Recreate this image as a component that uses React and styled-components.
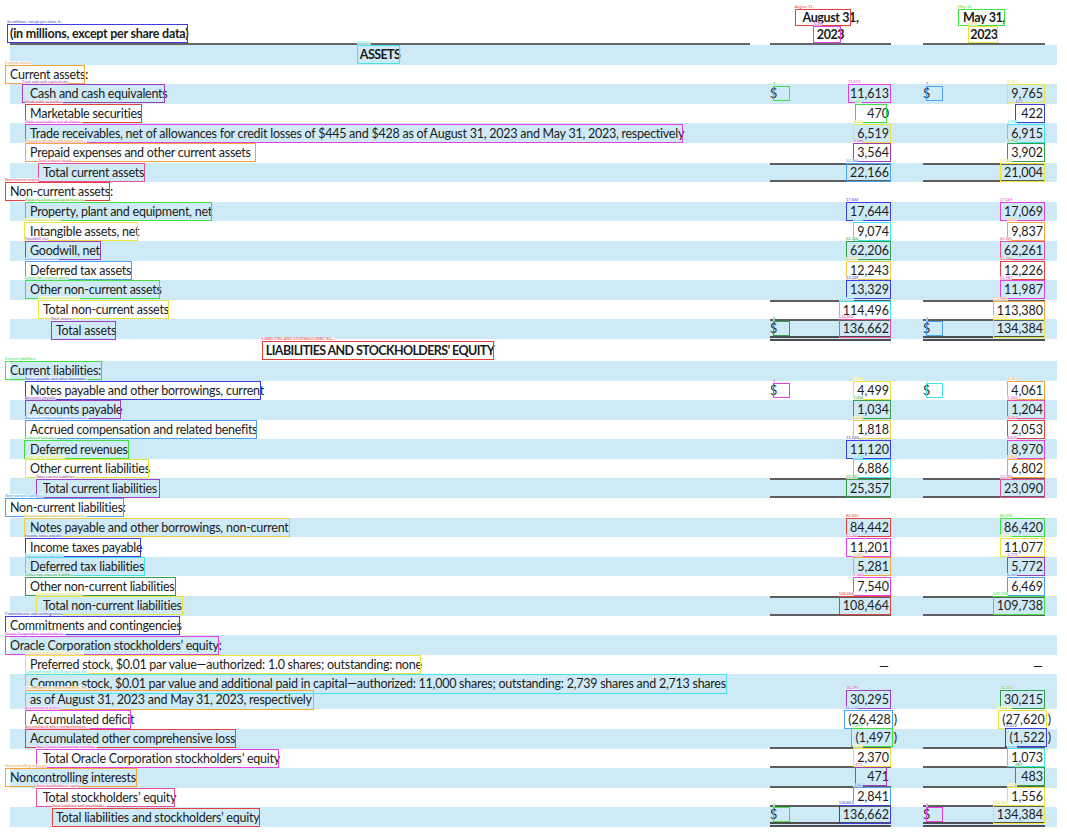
import React from 'react';
import styled, { createGlobalStyle } from 'styled-components';

const GlobalStyle = createGlobalStyle`
  body {
    margin: 0;
    background: #fff;
    font-family: Lato, 'Liberation Sans', sans-serif;
    color: #1b1b1b;
  }
`;

// label | gap | Aug 31 | gap | May 31 | tail
const COLS = '740px 20px 121px 32px 122px 12px';
const RULE = '2px solid #5e5e5e';

const C = {
  blue: '#3c3ce2',
  purple: '#a03cbe',
  red: '#e6403c',
  magenta: '#e440e6',
  pink: '#ea4c9c',
  orange: '#f2a63c',
  yellow: '#ece43a',
  gold: '#f0cc44',
  green: '#40e040',
  dgreen: '#30a048',
  cyan: '#40e4ea',
  lblue: '#4ca2f2',
};

const Sheet = styled.div`
  width: 1047px;
  padding: 0 10px;
  font-size: 12.5px;
`;

const HeaderRow = styled.div`
  display: grid;
  grid-template-columns: ${COLS};
  height: 45px;
  align-items: end;
`;

const HeadLabel = styled.div`
  grid-column: 1;
  border-bottom: 2px solid #666;
  padding-bottom: 2px;
  font-weight: 700;
  line-height: 15px;
  letter-spacing: -0.25px;
`;

const DateHead = styled.div`
  grid-column: ${p => p.$col};
  display: flex;
  flex-direction: column;
  align-items: center;
  border-bottom: 2px solid #666;
  font-weight: 700;
  line-height: 17px;
  letter-spacing: -0.4px;
`;

const Row = styled.div`
  display: grid;
  grid-template-columns: ${COLS};
  height: ${p => p.$h || 19.6}px;
  background: ${p => (p.$shade ? '#cfeaf7' : 'transparent')};
`;

const LabelCell = styled.div`
  grid-column: 1;
  display: flex;
  flex-direction: column;
  justify-content: center;
  align-items: flex-start;
  padding-left: ${p => [0, 20, 33, 46][p.$lvl]}px;
  line-height: ${p => (p.$tall ? 16 : 15)}px;
  letter-spacing: -0.25px;
  white-space: nowrap;
`;

const SectionCell = styled.div`
  grid-column: 1;
  display: flex;
  align-items: center;
  justify-content: center;
  font-weight: 700;
  line-height: 15px;
  letter-spacing: -0.6px;
  white-space: nowrap;
  padding-top: ${p => (p.$pad ? 2 : 0)}px;
`;

const NumCell = styled.div`
  grid-column: ${p => p.$col};
  display: flex;
  align-items: ${p => (p.$low ? 'flex-end' : 'center')};
  justify-content: flex-end;
  padding: 0 2px ${p => (p.$low ? 2 : 0)}px 0;
  line-height: 15px;
  white-space: nowrap;
  border-top: ${p => (p.$top ? RULE : 'none')};
  border-bottom: ${p => (p.$dbl ? '5px double #4e4e4e' : p.$bottom ? RULE : 'none')};
`;

// annotation frame drawn over a piece of text, with its tiny caption
const Tag = styled.span`
  position: relative;
  display: inline-block;

  &::after {
    content: '';
    position: absolute;
    left: ${p => p.$l}px;
    right: ${p => p.$r}px;
    top: ${p => p.$v}px;
    bottom: ${p => p.$v}px;
    border: 1.5px solid ${p => p.$c};
    pointer-events: none;
  }
`;

const TagLabel = styled.span`
  position: absolute;
  left: ${p => p.$l}px;
  top: ${p => p.$v - 4}px;
  font-size: 4px;
  line-height: 4px;
  font-weight: 400;
  letter-spacing: 0;
  color: ${p => p.$c};
  background: rgba(255, 255, 255, 0.7);
  white-space: nowrap;
`;

const Dollar = styled.span`
  position: relative;
  margin-right: auto;

  &::after {
    content: '';
    position: absolute;
    left: 3px;
    width: 15px;
    top: 0;
    bottom: 0;
    border: 1.5px solid ${p => p.$c};
  }
`;

const Paren = styled.span`
  margin-left: 3px;
  margin-right: -8px;
`;

const Dash = styled.span`
  padding-top: 3px;
`;

const short = t => (t.length > 32 ? t.slice(0, 32) + '…' : t);

// l / r: css offsets of the frame from the text box (negative = outside)
const Box = ({ c, text, l = -5, r = 0, v = -2 }) => (
  <Tag $c={c} $l={l} $r={r} $v={v}>
    <TagLabel $c={c} $l={l} $v={v}>{short(text)}</TagLabel>
    {text}
  </Tag>
);

const Amount = ({ cell }) => {
  if (!cell) return null;
  if (cell === '—') return <Dash>—</Dash>;
  const { v, c, l = -4, r = -2 } = cell;
  const neg = v.startsWith('(');
  const core = neg ? v.slice(0, -1) : v;
  return (
    <>
      <Box c={c} text={core} l={l} r={r} />
      {neg && <Paren>)</Paren>}
    </>
  );
};

const n = (v, c, l, r) => ({ v, c, l, r });

// label "x" = how far the frame reaches past the end of the text (px)
const rows = [
  { section: true, label: 'ASSETS', c: C.cyan, l: -3, r: 0 },
  { label: 'Current assets:', lvl: 0, c: C.orange, x: -3 },
  { label: 'Cash and cash equivalents', lvl: 1, c: C.purple, l: -8, x: -2, a: n('11,613', C.magenta, -2), b: n('9,765', C.yellow), usd: [C.green, C.lblue] },
  { label: 'Marketable securities', lvl: 1, c: C.red, a: n('470', C.green, -12, 2), b: n('422', C.blue, -6) },
  { label: 'Trade receivables, net of allowances for credit losses of $445 and $428 as of August 31, 2023 and May 31, 2023, respectively', lvl: 1, c: C.magenta, x: -1, a: n('6,519', C.yellow), b: n('6,915', C.cyan) },
  { label: 'Prepaid expenses and other current assets', lvl: 1, c: C.orange, x: 5, a: n('3,564', C.purple), b: n('3,902', C.dgreen) },
  { label: 'Total current assets', lvl: 2, c: C.pink, x: 1, a: n('22,166', C.lblue), b: n('21,004', C.yellow), top: true, bottom: true },
  { label: 'Non-current assets:', lvl: 0, c: C.red, x: -3 },
  { label: 'Property, plant and equipment, net', lvl: 1, c: C.green, a: n('17,644', C.blue), b: n('17,069', C.magenta) },
  { label: 'Intangible assets, net', lvl: 1, c: C.yellow, l: -6, x: -1, a: n('9,074', C.cyan), b: n('9,837', C.orange) },
  { label: 'Goodwill, net', lvl: 1, c: C.purple, x: 1, a: n('62,206', C.dgreen), b: n('62,261', C.pink) },
  { label: 'Deferred tax assets', lvl: 1, c: C.lblue, x: 1, a: n('12,243', C.gold), b: n('12,226', C.red) },
  { label: 'Other non-current assets', lvl: 1, c: C.green, x: -2, a: n('13,329', C.blue), b: n('11,987', C.magenta) },
  { label: 'Total non-current assets', lvl: 2, c: C.yellow, a: n('114,496', C.cyan), b: n('113,380', C.orange), top: true },
  { label: 'Total assets', lvl: 3, c: C.purple, a: n('136,662', C.pink), b: n('134,384', C.yellow), usd: [C.dgreen, C.lblue], top: true, dbl: true },
  { section: true, label: 'LIABILITIES AND STOCKHOLDERS’ EQUITY', c: C.red, l: -4, r: 0, h: 22 },
  { label: 'Current liabilities:', lvl: 0, c: C.green, x: 1 },
  { label: 'Notes payable and other borrowings, current', lvl: 1, c: C.blue, x: -3, a: n('4,499', C.yellow), b: n('4,061', C.orange), usd: [C.magenta, C.cyan] },
  { label: 'Accounts payable', lvl: 1, c: C.purple, x: -1, a: n('1,034', C.dgreen), b: n('1,204', C.pink) },
  { label: 'Accrued compensation and related benefits', lvl: 1, c: C.lblue, a: n('1,818', C.gold), b: n('2,053', C.red) },
  { label: 'Deferred revenues', lvl: 1, c: C.green, l: -6, x: 1, a: n('11,120', C.blue), b: n('8,970', C.magenta) },
  { label: 'Other current liabilities', lvl: 1, c: C.yellow, x: -1, a: n('6,886', C.cyan), b: n('6,802', C.orange) },
  { label: 'Total current liabilities', lvl: 2, c: C.purple, l: -7, x: 3, a: n('25,357', C.dgreen), b: n('23,090', C.pink), top: true, bottom: true },
  { label: 'Non-current liabilities:', lvl: 0, c: C.lblue, x: -2 },
  { label: 'Notes payable and other borrowings, non-current', lvl: 1, c: C.gold, l: -6, x: 1, a: n('84,442', C.red), b: n('86,420', C.green) },
  { label: 'Income taxes payable', lvl: 1, c: C.blue, x: -1, a: n('11,201', C.magenta), b: n('11,077', C.yellow) },
  { label: 'Deferred tax liabilities', lvl: 1, c: C.cyan, x: 1, a: n('5,281', C.orange), b: n('5,772', C.purple) },
  { label: 'Other non-current liabilities', lvl: 1, c: C.dgreen, x: 1, a: n('7,540', C.magenta), b: n('6,469', C.lblue) },
  { label: 'Total non-current liabilities', lvl: 2, c: C.yellow, l: -7, x: 1, a: n('108,464', C.red), b: n('109,738', C.green), top: true, bottom: true },
  { label: 'Commitments and contingencies', lvl: 0, c: C.blue, x: -2 },
  { label: 'Oracle Corporation stockholders’ equity:', lvl: 0, c: C.magenta, x: -3 },
  { label: 'Preferred stock, $0.01 par value—authorized: 1.0 shares; outstanding: none', lvl: 1, c: C.yellow, x: -1, a: '—', b: '—' },
  {
    lines: [
      { text: 'Common stock, $0.01 par value and additional paid in capital—authorized: 11,000 shares; outstanding: 2,739 shares and 2,713 shares', c: C.cyan, x: 1 },
      { text: 'as of August 31, 2023 and May 31, 2023, respectively', c: C.orange, x: 2 },
    ],
    lvl: 1, h: 35, a: n('30,295', C.purple), b: n('30,215', C.dgreen),
  },
  { label: 'Accumulated deficit', lvl: 1, c: C.magenta, x: -3, a: n('(26,428)', C.lblue), b: n('(27,620)', C.yellow) },
  { label: 'Accumulated other comprehensive loss', lvl: 1, c: C.red, x: 1, a: n('(1,497)', C.green), b: n('(1,522)', C.blue), bottom: true },
  { label: 'Total Oracle Corporation stockholders’ equity', lvl: 2, c: C.magenta, l: -7, x: -1, a: n('2,370', C.yellow), b: n('1,073', C.cyan), bottom: true },
  { label: 'Noncontrolling interests', lvl: 0, c: C.orange, x: 1, a: n('471', C.purple, -12, 2), b: n('483', C.dgreen, -6), bottom: true },
  { label: 'Total stockholders’ equity', lvl: 2, c: C.pink, l: -7, x: -1, a: n('2,841', C.lblue), b: n('1,556', C.yellow), bottom: true },
  { label: 'Total liabilities and stockholders’ equity', lvl: 3, c: C.red, l: -4, x: 1, a: n('136,662', C.blue), b: n('134,384', C.yellow), usd: [C.green, C.magenta], dbl: true },
];

const Figures = ({ row, col, cell, usd }) => (
  <NumCell
    $col={col}
    $low={!!row.lines}
    $top={row.top}
    $bottom={row.bottom}
    $dbl={row.dbl}
  >
    {usd && (
      <Dollar $c={usd}>
        <TagLabel $c={usd} $l={3} $v={0}>$</TagLabel>$
      </Dollar>
    )}
    <Amount cell={cell} />
  </NumCell>
);

export default function App() {
  return (
    <>
      <GlobalStyle />
      <Sheet>
        <HeaderRow>
          <HeadLabel>
            <Box c={C.blue} text="(in millions, except per share data)" l={-3} r={0} />
          </HeadLabel>
          <DateHead $col={3}>
            <Box c={C.red} text="August 31," l={-8} r={7} v={0} />
            <Box c={C.magenta} text="2023" l={-4} r={3} v={0} />
          </DateHead>
          <DateHead $col={5}>
            <Box c={C.green} text="May 31," l={-5} r={0} v={0} />
            <Box c={C.yellow} text="2023" l={-2} r={0} v={0} />
          </DateHead>
        </HeaderRow>

        {rows.map((row, i) => (
          <Row key={i} $shade={i % 2 === 0} $h={row.h}>
            {row.section ? (
              <SectionCell $pad={!!row.h}>
                <Box c={row.c} text={row.label} l={row.l} r={row.r} />
              </SectionCell>
            ) : (
              <LabelCell $lvl={row.lvl} $tall={!!row.lines}>
                {(row.lines || [{ text: row.label, c: row.c, l: row.l, x: row.x }]).map((ln, j) => (
                  <Box key={j} c={ln.c} text={ln.text} l={ln.l} r={-(ln.x || 0)} />
                ))}
              </LabelCell>
            )}
            {!row.section && (
              <>
                <Figures row={row} col={3} cell={row.a} usd={row.usd && row.usd[0]} />
                <Figures row={row} col={5} cell={row.b} usd={row.usd && row.usd[1]} />
              </>
            )}
          </Row>
        ))}
      </Sheet>
    </>
  );
}
